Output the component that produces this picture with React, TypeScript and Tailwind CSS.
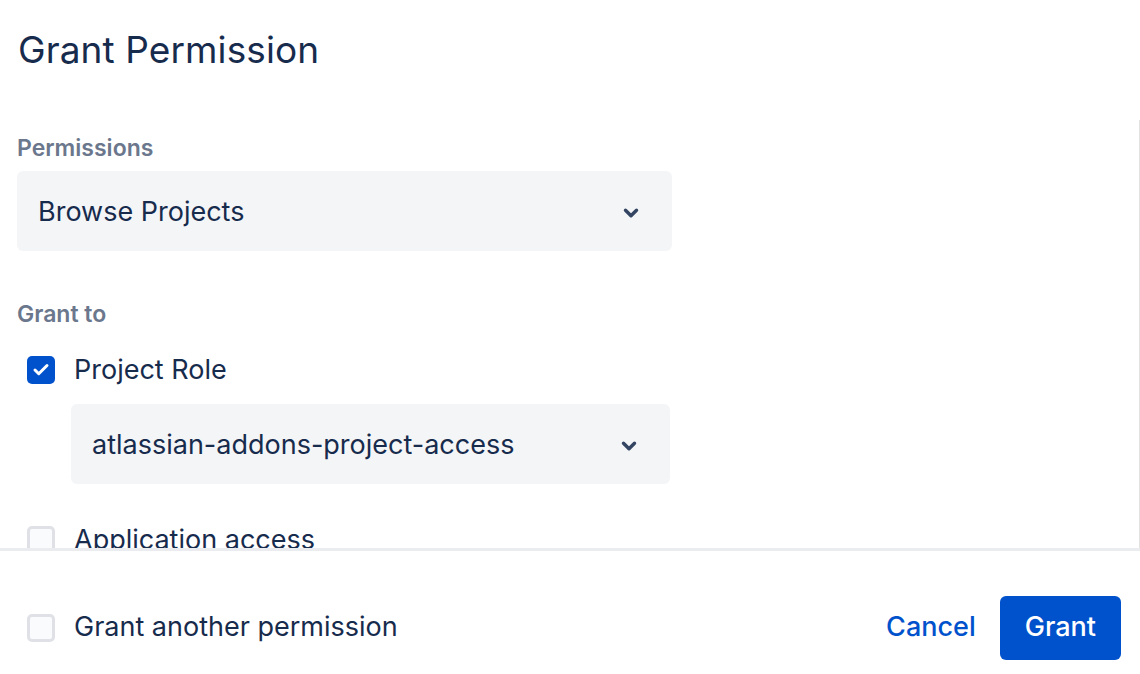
import { Check, ChevronDown } from "lucide-react";

function Select({ value }: { value: string }) {
  return (
    <div className="flex h-[80px] items-center justify-between rounded-[6px] bg-[#f4f5f7] pl-[21px] pr-[30px] pt-[3px]">
      <span className="text-[27px] text-[#172b4d]">{value}</span>
      <ChevronDown className="h-[22px] w-[22px] text-[#344563]" strokeWidth={3.75} />
    </div>
  );
}

function Checkbox({ checked }: { checked?: boolean }) {
  return checked ? (
    <span className="flex h-[28px] w-[28px] shrink-0 items-center justify-center rounded-[5px] bg-[#0052cc]">
      <Check className="h-[18px] w-[18px] text-white" strokeWidth={4} />
    </span>
  ) : (
    <span className="h-[28px] w-[28px] shrink-0 rounded-[5px] border-[3px] border-[#dfe1e6] bg-[#fafbfc]" />
  );
}

export default function App() {
  return (
    <div className="flex h-[674px] w-[1140px] flex-col bg-white font-['Inter',sans-serif] text-[#172b4d]">
      <div className="h-[120px] shrink-0 pl-[18px] pt-[26px]">
        <h1 className="text-[37px] leading-[48px] font-normal tracking-[0.1px]">Grant Permission</h1>
      </div>

      <div className="min-h-0 flex-1 overflow-hidden border-r border-[#e2e2e2] pl-[17px] pr-[467px]">
        <div className="pt-[12px] text-[23px] leading-[32px] font-semibold text-[#6b778c]">
          Permissions
        </div>
        <div className="mt-[7px]">
          <Select value="Browse Projects" />
        </div>

        <div className="mt-[47px] text-[23px] leading-[32px] font-semibold text-[#6b778c]">
          Grant to
        </div>
        <div className="mt-[24px] flex items-center gap-[19px] pl-[10px]">
          <Checkbox checked />
          <span className="text-[27px] leading-[32px]">Project Role</span>
        </div>
        <div className="ml-[54px] mt-[18px] mr-[2px]">
          <Select value="atlassian-addons-project-access" />
        </div>
        <div className="mt-[40px] flex items-center gap-[19px] pl-[10px]">
          <Checkbox />
          <span className="text-[27px] leading-[32px]">Application access</span>
        </div>
      </div>

      <div className="flex h-[126px] shrink-0 items-center justify-between border-t-[3px] border-[#ebecf0] pl-[27px] pr-[19px] pt-[30px]">
        <div className="flex items-center gap-[19px]">
          <Checkbox />
          <span className="text-[27px]">Grant another permission</span>
        </div>
        <div className="flex items-center gap-[24px]">
          <button className="text-[27px] font-medium text-[#0052cc]">Cancel</button>
          <button className="h-[64px] rounded-[6px] bg-[#0052cc] px-[25px] text-[27px] font-medium text-white">
            Grant
          </button>
        </div>
      </div>
    </div>
  );
}
